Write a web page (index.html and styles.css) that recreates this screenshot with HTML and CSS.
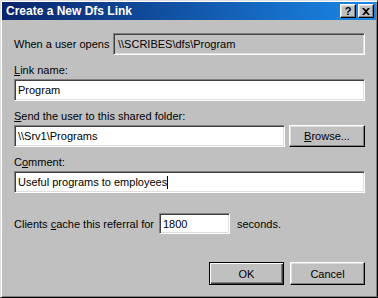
FILE: index.html
```html
<!DOCTYPE html>
<html lang="en">
<head>
    <meta charset="UTF-8">
    <title>Create a New Dfs Link</title>
    <link rel="stylesheet" href="styles.css">
</head>
<body>
    <div class="window">
        <div class="titlebar">
            <span class="title">Create a New Dfs Link</span>
            <span class="tbtn help">?</span>
            <span class="tbtn close">
                <svg width="8" height="7" viewBox="0 0 8 7"><path d="M0 0h2l2 2 2-2h2L5 3.5 8 7H6L4 5 2 7H0l3-3.5z" fill="#000"/></svg>
            </span>
        </div>
        <div class="content">
            <div class="row-opens">
                <span class="opens-label">When a user opens</span>
                <div class="field readonly">\\SCRIBES\dfs\Program</div>
            </div>

            <div class="label"><u>L</u>ink name:</div>
            <div class="field">Program</div>

            <div class="label"><u>S</u>end the user to this shared folder:</div>
            <div class="row-folder">
                <div class="field">\\Srv1\Programs</div>
                <div class="btn browse"><u>B</u>rowse...</div>
            </div>

            <div class="label">C<u>o</u>mment:</div>
            <div class="field">Useful programs to employees<span class="caret"></span></div>

            <div class="row-cache">
                <span class="cache-label">Clients <u>c</u>ache this referral for</span>
                <div class="field small">1800</div>
                <span class="seconds">seconds.</span>
            </div>

            <div class="buttons">
                <div class="btn default">OK</div>
                <div class="btn">Cancel</div>
            </div>
        </div>
    </div>
</body>
</html>
```

FILE: styles.css
```css
body {
    margin: 0;
    background-color: #c0c0c0;
    font-family: "Liberation Sans", Arial, sans-serif;
    font-size: 11px;
    color: #000;
}
.window {
    width: 378px;
    height: 298px;
    box-sizing: border-box;
    background-color: #c0c0c0;
    border: 1px solid;
    border-color: #dfdfdf #000 #000 #dfdfdf;
    box-shadow: inset 1px 1px #fff, inset -1px -1px #808080;
    padding: 1px;
    display: flex;
    flex-direction: column;
}
.titlebar {
    height: 18px;
    background: linear-gradient(to right, #0a246a, #1a88e8);
    display: flex;
    align-items: center;
    padding: 0 2px 0 4px;
    color: #fff;
    font-weight: bold;
    font-size: 12px;
}
.title {
    flex: 1;
}
.tbtn {
    width: 16px;
    height: 14px;
    box-sizing: border-box;
    background-color: #c0c0c0;
    border: 1px solid;
    border-color: #fff #000 #000 #fff;
    box-shadow: inset -1px -1px #808080, inset 1px 1px #dfdfdf;
    display: flex;
    align-items: center;
    justify-content: center;
    color: #000;
    font-size: 11px;
    font-weight: bold;
    line-height: 1;
}
.help {
    margin-right: 2px;
}
.content {
    flex: 1;
    padding: 13px 11px 0 12px;
    display: flex;
    flex-direction: column;
}
.row-opens {
    display: flex;
    align-items: center;
}
.opens-label {
    width: 99px;
    flex-shrink: 0;
}
.field {
    height: 22px;
    box-sizing: border-box;
    background-color: #fff;
    border: 1px solid;
    border-color: #808080 #fff #fff #808080;
    box-shadow: inset 1px 1px #404040, inset -1px -1px #dfdfdf;
    padding: 0 3px;
    display: flex;
    align-items: center;
    white-space: nowrap;
}
.readonly {
    flex: 1;
    background-color: #c0c0c0;
    padding-left: 4px;
}
.label {
    line-height: 13px;
    margin: 9px 0 2px;
}
.row-folder {
    display: flex;
    gap: 4px;
}
.row-folder .field {
    flex: 1;
}
.caret {
    display: inline-block;
    width: 1px;
    height: 13px;
    background-color: #000;
}
.row-cache {
    display: flex;
    align-items: center;
    margin-top: 20px;
}
.cache-label {
    width: 145px;
}
.small {
    width: 71px;
    height: 21px;
}
.seconds {
    margin-left: 7px;
}
.btn {
    width: 75px;
    height: 23px;
    box-sizing: border-box;
    border: 1px solid;
    border-color: #fff #000 #000 #fff;
    box-shadow: inset -1px -1px #808080, inset 1px 1px #dfdfdf;
    display: flex;
    align-items: center;
    justify-content: center;
}
.browse {
    width: 76px;
    height: 22px;
}
.buttons {
    display: flex;
    justify-content: flex-end;
    gap: 6px;
    margin-top: 28px;
}
.default {
    border-color: #000;
    box-shadow: inset 1px 1px #fff, inset -1px -1px #404040, inset -2px -2px #808080;
}
```
